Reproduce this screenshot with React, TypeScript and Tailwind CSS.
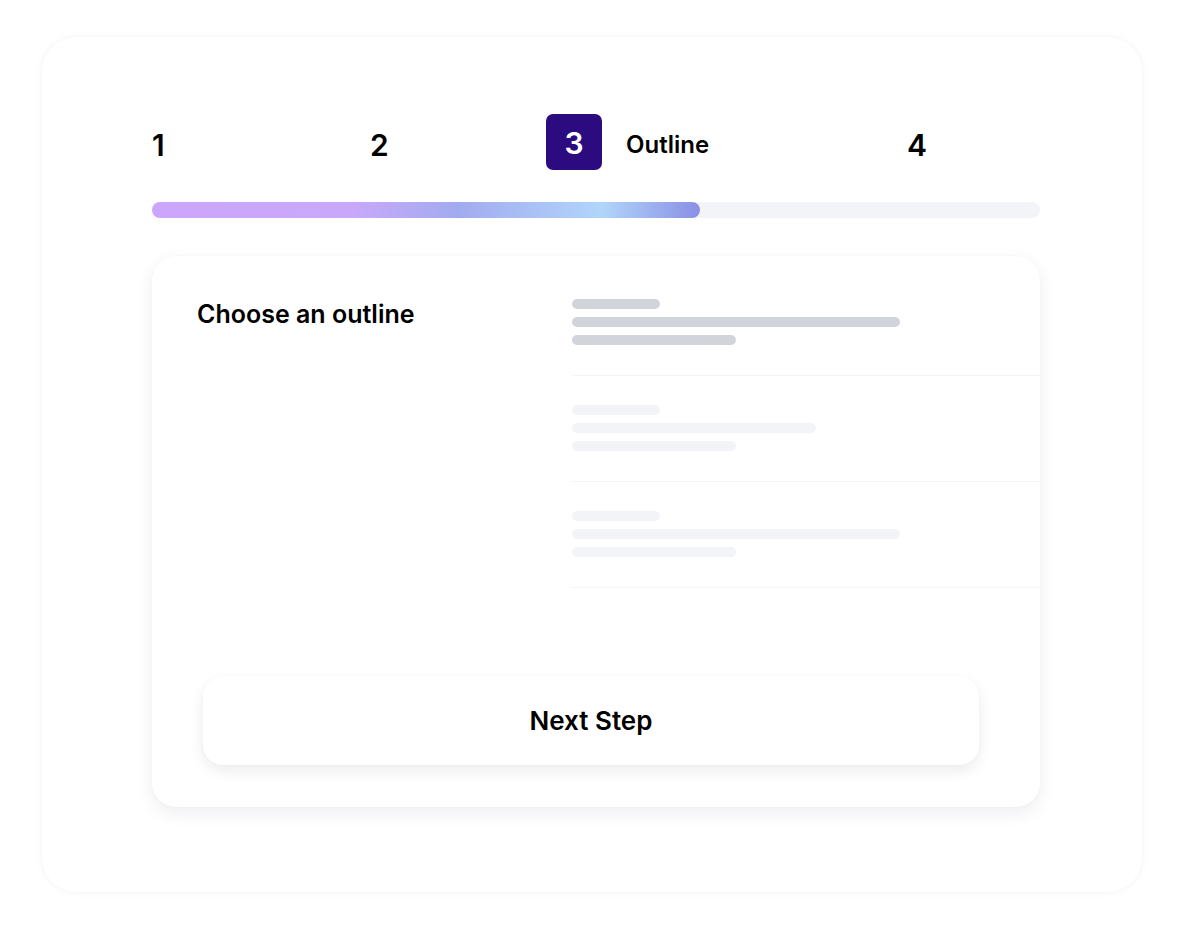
import React from 'react';

// Outline step of a multi-step wizard – skeleton state
const rows = [
  { tone: 'bg-[#d1d5db]', mid: 'w-[328px]' },
  { tone: 'bg-[#f3f4f8]', mid: 'w-[244px]' },
  { tone: 'bg-[#f3f4f8]', mid: 'w-[328px]' },
];

export default function App() {
  return (
    <div className="min-h-screen bg-white px-[42px] pt-[37px] pb-[47px] font-['Inter','Noto_Sans',sans-serif] text-black">
      <div className="rounded-[34px] bg-white pl-[110px] pr-[102px] pt-[77px] pb-[85px] shadow-[0_0_3px_2px_rgba(0,0,0,0.018),0_0_16px_rgba(0,0,0,0.02)]">
        {/* Steps */}
        <div className="flex h-[56px] items-center">
          <div className="w-[218px] pt-[5px] text-[30px] font-semibold leading-none">1</div>
          <div className="w-[176px] pt-[5px] text-[30px] font-semibold leading-none">2</div>
          <div className="flex w-[361px] items-center">
            <div className="flex h-[56px] w-[56px] items-center justify-center rounded-[7px] bg-[#2c0b80] pt-[2px] text-[30px] font-semibold leading-none text-white">
              3
            </div>
            <span className="ml-[24px] pt-[5px] text-[24px] font-semibold leading-none">Outline</span>
          </div>
          <div className="pt-[5px] text-[30px] font-semibold leading-none">4</div>
        </div>

        {/* Progress */}
        <div className="mt-[32px] h-[16px] w-full rounded-full bg-[#f3f4f8]">
          <div className="h-full w-[548px] rounded-full bg-[linear-gradient(90deg,#cca6fc_0%,#c9a8fb_36%,#a2abf0_56%,#b1d5fb_82%,#8a8fe5_100%)]" />
        </div>

        {/* Card */}
        <div className="mt-[38px] overflow-hidden rounded-[24px] bg-white shadow-[0_6px_18px_rgba(20,20,60,0.07),0_0_2px_rgba(0,0,0,0.04)]">
          <div className="flex">
            <div className="w-[420px] pl-[45px] pt-[42px]">
              <h2 className="text-[25px] font-semibold leading-[32px]">Choose an outline</h2>
            </div>
            <div className="flex-1 pt-[43px]">
              {rows.map((r, i) => (
                <div key={i} className={`border-b border-[#f3f4f6] pb-[30px] ${i > 0 ? 'pt-[29px]' : ''}`}>
                  <div className={`h-[10px] w-[88px] rounded-full ${r.tone}`} />
                  <div className={`mt-[8px] h-[10px] rounded-full ${r.mid} ${r.tone}`} />
                  <div className={`mt-[8px] h-[10px] w-[164px] rounded-full ${r.tone}`} />
                </div>
              ))}
            </div>
          </div>

          <div className="pb-[42px] pl-[51px] pt-[88px]">
            <button className="flex h-[89px] w-[776px] items-center justify-center rounded-[20px] bg-white text-[26px] font-semibold shadow-[0_6px_14px_rgba(20,20,60,0.08),0_0_3px_rgba(0,0,0,0.03)]">
              Next Step
            </button>
          </div>
        </div>
      </div>
    </div>
  );
}
